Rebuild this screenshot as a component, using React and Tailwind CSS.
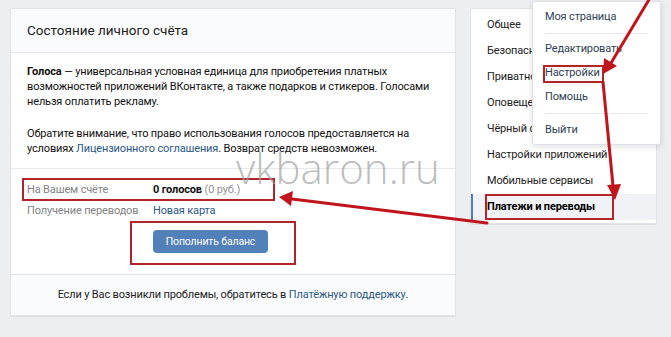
import React from 'react'

const menu = [
  'Общее',
  'Безопасность',
  'Приватность',
  'Оповещения',
  'Чёрный список',
  'Настройки приложений',
  'Мобильные сервисы',
]

const Arrows = () => (
  <svg className="absolute inset-0 pointer-events-none" width="671" height="337" viewBox="0 0 671 337">
    <g stroke="#c1151d" strokeWidth="3" strokeLinecap="round" fill="none">
      <line x1="650" y1="-2" x2="611" y2="63" />
      <line x1="603" y1="82" x2="613" y2="186" />
      <line x1="487" y1="223" x2="292" y2="199" />
    </g>
    <g fill="#c1151d">
      <polygon points="603,74 604,58 617,66" />
      <polygon points="615,200 607,185 621,184" />
      <polygon points="279,197 293,191 291,206" />
    </g>
  </svg>
)

export default function App() {
  return (
    <div
      className="relative w-[671px] h-[337px] overflow-hidden bg-[#edeef0] flex items-start gap-[14px] pl-[10px] pt-[8px] text-[11px] tracking-[-0.15px] text-[#111]"
      style={{ fontFamily: 'Roboto, "Open Sans", sans-serif' }}
    >
      {/* Main card */}
      <div className="relative w-[446px] bg-white rounded-[2px] border border-[#e1e3e8] shadow-[0_1px_0_#dcdee2]">
        <div className="h-[44px] flex items-center px-[16px] bg-[#fafbfc] border-b border-[#e7e8ec] text-[13.5px] tracking-normal text-[#222]">
          Состояние личного счёта
        </div>

        <div className="px-[16px] pt-[11px] pb-[12px] leading-[15px]">
          <p>
            <b className="font-bold">Голоса</b> — универсальная условная единица для приобретения платных возможностей приложений ВКонтакте, а также подарков и стикеров. Голосами нельзя оплатить рекламу.
          </p>
          <p className="mt-[17px]">
            Обратите внимание, что право использования голосов предоставляется на условиях <span className="text-[#2a5885]">Лицензионного соглашения</span>. Возврат средств невозможен.
          </p>
        </div>

        <div className="border-t border-[#e7e8ec] px-[16px] pt-[11px] pb-[21px]">
          <div className="relative flex items-center h-[21px]">
            <span className="w-[126px] text-[#828282]">На Вашем счёте</span>
            <span><b className="font-bold">0 голосов</b> <span className="text-[#939393]">(0 руб.)</span></span>
            <span className="absolute left-[-5px] top-[-2px] w-[253px] h-[23px] border-2 border-[#b3232a]" />
          </div>
          <div className="flex items-center h-[21px]">
            <span className="w-[126px] text-[#828282]">Получение переводов</span>
            <span className="text-[#2a5885]">Новая карта</span>
          </div>
          <div className="pl-[126px] mt-[8px]">
            <div className="relative w-[115px]">
              <button className="w-[115px] h-[23px] rounded-[4px] bg-[#5181b8] text-white text-[10.5px]">
                Пополнить баланс
              </button>
              <span className="absolute left-[-23px] top-[-9px] w-[166px] h-[44px] border-2 border-[#b3232a]" />
            </div>
          </div>
        </div>

        <div className="h-[41px] flex items-center justify-center bg-[#fafbfc] border-t border-[#e7e8ec] text-[#222]">
          Если у Вас возникли проблемы, обратитесь в&nbsp;<span className="text-[#2a5885]">Платёжную поддержку</span>.
        </div>

        <div
          className="absolute left-[225px] top-[138px] text-[42px] leading-none text-[#a0a0a0]/70 font-light tracking-[0px]"
          style={{ fontFamily: '"Open Sans", sans-serif' }}
        >
          vkbaron.ru
        </div>
      </div>

      {/* Sidebar */}
      <div className="relative w-[187px] bg-white rounded-[2px] border border-[#e1e3e8] shadow-[0_1px_0_#dcdee2] pt-[3px] pb-[3px]">
        {menu.map((item) => (
          <div key={item} className="h-[26px] flex items-center pl-[16px] text-[#222] whitespace-nowrap">
            {item}
          </div>
        ))}
        <div className="relative h-[26px] flex items-center pl-[16px] bg-[#f0f2f5] border-l-2 border-[#5181b8] font-bold text-[#000]">
          <span className="ml-[-2px]">Платежи и переводы</span>
          <span className="absolute left-[12px] top-[0px] w-[129px] h-[26px] border-2 border-[#b3232a]" />
        </div>

        {/* Dropdown */}
        <div className="absolute left-[61px] top-[-8px] w-[129px] bg-white rounded-[3px] border border-[#dfe2e8] shadow-[0_2px_6px_rgba(0,0,0,0.12)] pt-[3px] pb-[2px] text-[#2f3e52]">
          <div className="h-[24px] flex items-center pl-[12px]">Моя страница</div>
          <div className="h-[8px] flex items-center px-[12px]"><div className="w-full h-px bg-[#e7e8ec]" /></div>
          <div className="h-[24px] flex items-center pl-[12px] whitespace-nowrap">Редактировать</div>
          <div className="relative h-[24px] flex items-center pl-[12px]">
            Настройки
            <span className="absolute left-[10px] top-[4px] w-[61px] h-[18px] border-2 border-[#b3232a]" />
          </div>
          <div className="h-[24px] flex items-center pl-[12px]">Помощь</div>
          <div className="h-[9px] flex items-center px-[12px]"><div className="w-full h-px bg-[#e7e8ec]" /></div>
          <div className="h-[24px] flex items-center pl-[12px]">Выйти</div>
        </div>
      </div>

      <Arrows />
    </div>
  )
}
